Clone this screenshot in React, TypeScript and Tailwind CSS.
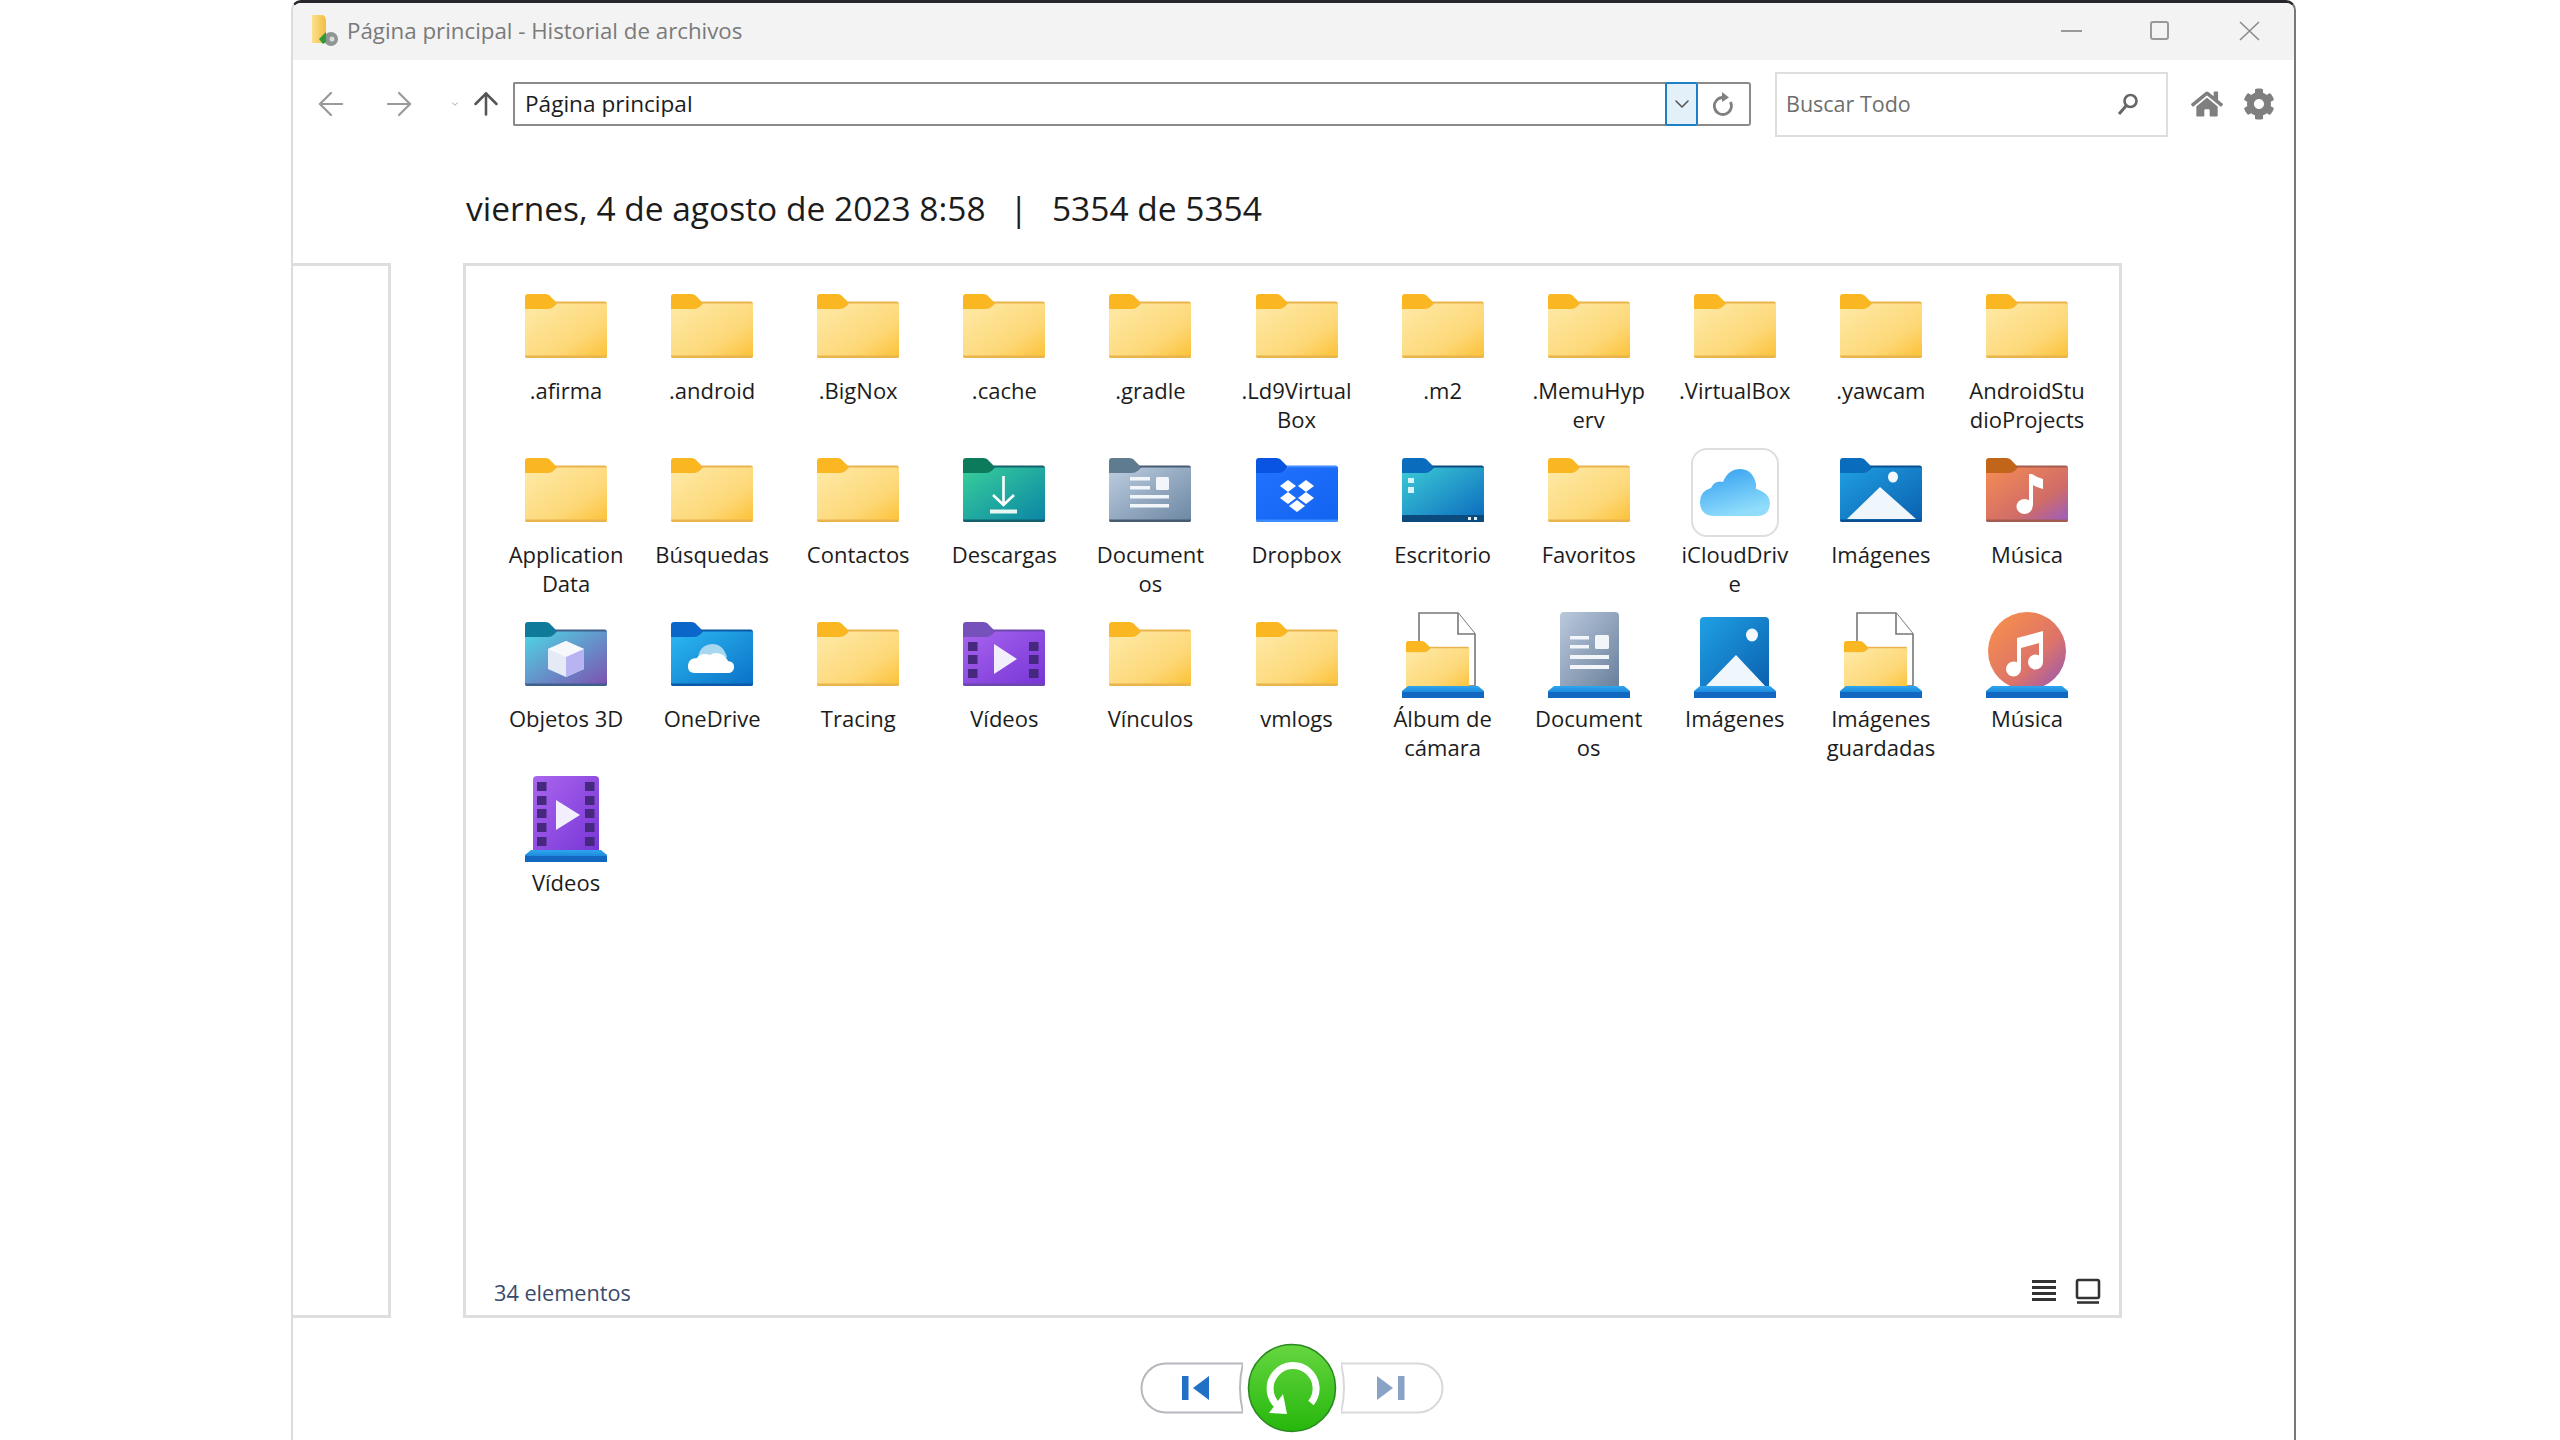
import React, { useId } from "react";
import { ArrowLeft, ArrowRight, ArrowUp, ChevronDown } from "lucide-react";
import { FaHome, FaCog } from "react-icons/fa";

type FP = { tab: string; from: string; to: string; mid?: string; edge: string; children?: React.ReactNode };

function FolderShape({ tab, from, to, mid, edge, children }: FP) {
  const id = useId();
  return (
    <g>
      <defs>
        <linearGradient id={id} x1="0" y1="0" x2="1" y2="1">
          <stop offset="0" stopColor={from} />
          {mid ? <stop offset="0.65" stopColor={mid} /> : null}
          <stop offset="1" stopColor={to} />
        </linearGradient>
      </defs>
      <path d="M25 7.5H80Q82 7.5 82 10V16H25Z" fill={edge} />
      <path d="M0 3Q0 0 3 0H20Q24 0 26 3L30 7Q32 9 30 11L27 14Q25 15.5 22 15.5H0Z" fill={tab} />
      <path d="M0 15H23Q26 15 29 12.5L32 9.5H82V62Q82 64 80 64H2Q0 64 0 62Z" fill={`url(#${id})`} />
      <path d="M0 61.5H82V62Q82 64 80 64H2Q0 64 0 62Z" fill={edge} />
      {children}
    </g>
  );
}

function Folder(props: FP) {
  return (
    <svg width="82" height="64" viewBox="0 0 82 64" className="mt-[10px] block">
      <FolderShape {...props} />
    </svg>
  );
}

const Yellow = () => <Folder tab="#fbb721" from="#feeaa8" mid="#fdd878" to="#fcc136" edge="#e9b44c" />;

const FilmStrip = ({ xs, ys, h }: { xs: number[]; ys: number[]; h: number }) => (
  <g fill="#46297e">
    {xs.flatMap((x) => ys.map((y) => <rect key={`${x}-${y}`} x={x} y={y} width="9.5" height={h} />))}
  </g>
);

const Download = () => (
  <Folder tab="#0c7b5c" from="#38cf9a" to="#0a84a6" edge="#14606c">
    <path d="M40.5 18V46M30 37L40.5 47L51 37" stroke="#fff" strokeWidth="2.6" fill="none" />
    <rect x="27" y="51.5" width="27" height="4" fill="#e6f8f4" />
  </Folder>
);

const Docs = () => (
  <Folder tab="#5e7b8f" from="#bccde0" to="#6c86a2" edge="#465a70">
    <g fill="#f2f6fa">
      <rect x="21" y="19" width="20" height="3.5" />
      <rect x="21" y="28" width="20" height="3.5" />
      <rect x="47" y="19" width="13" height="13" rx="1.5" />
      <rect x="21" y="37" width="39" height="3.5" />
      <rect x="21" y="46" width="39" height="3.5" />
    </g>
  </Folder>
);

const Dropbox = () => (
  <Folder tab="#0a54e4" from="#2272ff" to="#1263f0" edge="#3f8cff">
    <g fill="#fff">
      <path d="M32 22L40 28L32 34L24 28Z" />
      <path d="M50 22L58 28L50 34L42 28Z" />
      <path d="M32 34L40 40L32 46L24 40Z" />
      <path d="M50 34L58 40L50 46L42 40Z" />
      <path d="M41 42L49 48L41 54L33 48Z" />
    </g>
  </Folder>
);

const Desktop = () => (
  <Folder tab="#0a6cbc" from="#3ccbd6" to="#0b68bd" edge="#0a4a7c">
    <rect x="6" y="20" width="6" height="5" fill="#d8f4f6" />
    <rect x="6" y="29" width="6" height="6" fill="#d8f4f6" />
    <rect y="57" width="82" height="7" rx="1" fill="#0a4a7c" />
    <rect x="66" y="59" width="3" height="3" fill="#dfeef8" />
    <rect x="72" y="59" width="3" height="3" fill="#dfeef8" />
  </Folder>
);

const Pictures = () => (
  <Folder tab="#0a6cbc" from="#209fe2" to="#0a5fae" edge="#0a4f90">
    <ellipse cx="53" cy="19" rx="5" ry="5.5" fill="#f4f9fd" />
    <path d="M40 29L76 61H7Z" fill="#f0f7fc" />
  </Folder>
);

const Music = () => (
  <Folder tab="#c0651a" from="#f68c54" mid="#cf6c68" to="#985cc4" edge="#a25c50">
    <path d="M43 48V16H46Q50 19 57 21V31Q50 29 47 27V48Z" fill="#fff" />
    <ellipse cx="38.5" cy="48.5" rx="8" ry="7.5" fill="#fff" />
  </Folder>
);

const Objects3D = () => (
  <Folder tab="#0f7a9a" from="#4dd8e4" to="#7d4fb0" edge="#40608c">
    <path d="M41 19L59 27V47L41 55L23 47V27Z" fill="#e4eaf6" />
    <path d="M41 19L59 27L41 35L23 27Z" fill="#f6f8fc" />
    <path d="M41 35L59 27V47L41 55Z" fill="#b8b4f2" />
  </Folder>
);

const OneDrive = () => (
  <Folder tab="#0a66c8" from="#2cb8f2" to="#0a70c6" edge="#0a5aa8">
    <path d="M27 39Q27 23 41 22Q52 22 56 35L44 46H25Z" fill="#a8d8f0" />
    <path d="M23 51Q16 50 17 43Q18 36 26 36Q30 30 39 33Q44 29 52 33Q57 38 57 39Q64 40 63 46Q62 51 57 51Z" fill="#fff" />
  </Folder>
);

const VideoF = () => (
  <Folder tab="#7650bb" from="#a864ee" to="#7634d6" edge="#6d46b0">
    <FilmStrip xs={[5, 66]} ys={[20, 33, 47]} h={9} />
    <path d="M31 22L54 37L31 52Z" fill="#f3eefb" />
  </Folder>
);

const ICloud = () => {
  const id = useId();
  return (
    <div className="flex h-[89px] w-[88px] items-center justify-center rounded-[16px] border-2 border-[#dedede] bg-white">
      <svg width="70" height="48" viewBox="0 0 70 48">
        <defs>
          <linearGradient id={id} x1="0" y1="0" x2="0.4" y2="1">
            <stop offset="0" stopColor="#2f9df0" />
            <stop offset="1" stopColor="#8fdcfb" />
          </linearGradient>
        </defs>
        <path d="M13 47Q0 46 0 33Q0 22 11 19Q15 11 23 13Q28 0 41 0Q53 1 56 15Q56 18 56 20Q70 24 70 35Q69 47 57 47Z" fill={`url(#${id})`} />
      </svg>
    </div>
  );
};

function Tall({ children }: { children: React.ReactNode }) {
  const id = useId();
  return (
    <svg width="82" height="86" viewBox="0 0 82 86" className="block">
      <defs>
        <linearGradient id={id} x1="0" y1="0" x2="0" y2="1">
          <stop offset="0" stopColor="#2ea6ee" />
          <stop offset="1" stopColor="#0e6fcc" />
        </linearGradient>
      </defs>
      {children}
      <path d="M6 74H76L82 79V86H0V79Z" fill={`url(#${id})`} />
      <rect y="80" width="82" height="6" fill="#1268c0" />
    </svg>
  );
}

const FileFolder = () => (
  <Tall>
    <path d="M17 1H56L73 22V74H17Z" fill="#fff" stroke="#777" strokeWidth="1.6" />
    <path d="M56 1V22H73" fill="#fff" stroke="#777" strokeWidth="1.6" />
    <g transform="translate(4 29) scale(0.77 0.75)">
      <FolderShape tab="#fbb721" from="#feeaa8" mid="#fdd878" to="#fcc136" edge="#e9b44c" />
    </g>
  </Tall>
);

const DocTall = () => {
  const id = useId();
  return (
    <Tall>
      <defs>
        <linearGradient id={id} x1="0" y1="0" x2="1" y2="1">
          <stop offset="0" stopColor="#bac9dd" />
          <stop offset="1" stopColor="#687f9a" />
        </linearGradient>
      </defs>
      <rect x="12" y="0" width="59" height="78" rx="4" fill={`url(#${id})`} />
      <g fill="#f2f6fa">
        <rect x="22" y="24" width="19" height="3.5" />
        <rect x="22" y="33" width="19" height="3.5" />
        <rect x="47" y="23" width="14" height="14" rx="1.5" />
        <rect x="22" y="43" width="39" height="4" />
        <rect x="22" y="53" width="39" height="4" />
      </g>
    </Tall>
  );
};

const PicTall = () => {
  const id = useId();
  return (
    <Tall>
      <defs>
        <linearGradient id={id} x1="0" y1="0" x2="1" y2="1">
          <stop offset="0" stopColor="#20a0e4" />
          <stop offset="1" stopColor="#0a5fae" />
        </linearGradient>
      </defs>
      <rect x="6" y="5" width="69" height="73" rx="4" fill={`url(#${id})`} />
      <ellipse cx="58" cy="23" rx="6" ry="6.5" fill="#f4f9fd" />
      <path d="M42 43L73 76H10Z" fill="#f0f7fc" />
    </Tall>
  );
};

const MusicTall = () => {
  const id = useId();
  return (
    <Tall>
      <defs>
        <linearGradient id={id} x1="0" y1="0" x2="1" y2="1">
          <stop offset="0.1" stopColor="#f58d4e" />
          <stop offset="0.6" stopColor="#dd7468" />
          <stop offset="1" stopColor="#9255bc" />
        </linearGradient>
      </defs>
      <circle cx="41" cy="39" r="39" fill={`url(#${id})`} />
      <path d="M31 26L57 19V50H53V31L35 36V57H31Z" fill="#fff" />
      <ellipse cx="27.5" cy="57" rx="7.5" ry="7.5" fill="#fff" />
      <ellipse cx="49.5" cy="50" rx="7.5" ry="7.5" fill="#fff" />
    </Tall>
  );
};

const VideoTall = () => {
  const id = useId();
  return (
    <Tall>
      <defs>
        <linearGradient id={id} x1="0" y1="0" x2="1" y2="1">
          <stop offset="0" stopColor="#aa66ee" />
          <stop offset="1" stopColor="#7634d6" />
        </linearGradient>
      </defs>
      <rect x="8" y="0" width="66" height="80" rx="4" fill={`url(#${id})`} />
      <FilmStrip xs={[12, 60]} ys={[6, 20, 33, 47, 61]} h={9} />
      <path d="M31 24L55 39L31 54Z" fill="#f3eefb" />
    </Tall>
  );
};

const items: [string, React.FC][] = [
  [".afirma", Yellow],
  [".android", Yellow],
  [".BigNox", Yellow],
  [".cache", Yellow],
  [".gradle", Yellow],
  [".Ld9Virtual\nBox", Yellow],
  [".m2", Yellow],
  [".MemuHyp\nerv", Yellow],
  [".VirtualBox", Yellow],
  [".yawcam", Yellow],
  ["AndroidStu\ndioProjects", Yellow],
  ["Application\nData", Yellow],
  ["Búsquedas", Yellow],
  ["Contactos", Yellow],
  ["Descargas", Download],
  ["Document\nos", Docs],
  ["Dropbox", Dropbox],
  ["Escritorio", Desktop],
  ["Favoritos", Yellow],
  ["iCloudDriv\ne", ICloud],
  ["Imágenes", Pictures],
  ["Música", Music],
  ["Objetos 3D", Objects3D],
  ["OneDrive", OneDrive],
  ["Tracing", Yellow],
  ["Vídeos", VideoF],
  ["Vínculos", Yellow],
  ["vmlogs", Yellow],
  ["Álbum de\ncámara", FileFolder],
  ["Document\nos", DocTall],
  ["Imágenes", PicTall],
  ["Imágenes\nguardadas", FileFolder],
  ["Música", MusicTall],
  ["Vídeos", VideoTall],
];

function TitleIcon() {
  const id = useId();
  return (
    <svg width="26" height="32" viewBox="0 0 26 32" className="shrink-0">
      <defs>
        <linearGradient id={id} x1="0" y1="0" x2="1" y2="0">
          <stop offset="0" stopColor="#fbe08e" />
          <stop offset="1" stopColor="#f4bd3e" />
        </linearGradient>
      </defs>
      <path d="M0 0H11Q14 2 14 6V28H0Z" fill={`url(#${id})`} />
      <circle cx="19" cy="24" r="7" fill="#8f9692" />
      <circle cx="20" cy="24" r="2.5" fill="#dadada" />
      <path d="M7 24L14 17V27L11 29Z" fill="#2f9a3a" />
    </svg>
  );
}

function BackButton() {
  return (
    <svg width="103" height="52" viewBox="0 0 103 52" className="block">
      <path d="M26 1.5H103Q97 26 103 50.5H26A24.5 24.5 0 0 1 26 1.5Z" fill="#fff" stroke="#b6b8be" strokeWidth="2" />
      <rect x="42" y="14" width="6.5" height="24" fill="#2070c6" />
      <path d="M69 14V38L53 26Z" fill="#2070c6" />
    </svg>
  );
}

function NextButton() {
  return (
    <svg width="103" height="52" viewBox="0 0 103 52" className="block">
      <path d="M0 1.5H77A24.5 24.5 0 0 1 77 50.5H0Q6 26 0 1.5Z" fill="#fff" stroke="#d8d9dd" strokeWidth="2" />
      <path d="M36 14V38L52 26Z" fill="#88a3c6" />
      <rect x="57" y="14" width="6.5" height="24" fill="#88a3c6" />
    </svg>
  );
}

function RestoreButton() {
  const id = useId();
  return (
    <svg width="90" height="90" viewBox="0 0 90 90" className="block">
      <defs>
        <linearGradient id={id} x1="0" y1="0" x2="0" y2="1">
          <stop offset="0" stopColor="#66d640" />
          <stop offset="1" stopColor="#26b70c" />
        </linearGradient>
      </defs>
      <circle cx="45" cy="45" r="43.5" fill={`url(#${id})`} stroke="#2a8a22" strokeWidth="1.6" />
      <path d="M64 60A23 23 0 1 0 30 62" fill="none" stroke="#fff" strokeWidth="7" />
      <path d="M22 70L40 71L36 51Z" fill="#fff" />
    </svg>
  );
}

export default function App() {
  return (
    <div className="flex h-[1440px] w-[2560px] overflow-hidden bg-white pl-[291px] font-['Open_Sans','Noto_Sans',sans-serif]">
      <div className="flex h-[1440px] w-[2005px] flex-col rounded-t-[10px] border-t-[3px] border-r-2 border-l-2 border-t-[#26262c] border-r-[#77777f] border-l-[#dcdcdc] bg-white">
        <div className="flex h-[57px] shrink-0 items-center rounded-t-[8px] bg-[#f3f3f3] pr-[34px] pb-[2px] pl-[19px]">
          <TitleIcon />
          <span className="ml-[9px] text-[22.3px] text-[#7a7a7a]">Página principal - Historial de archivos</span>
          <div className="ml-auto flex items-center text-[#8a8a8a]">
            <div className="h-[2px] w-[21px] bg-[#999]" />
            <div className="ml-[68px] h-[19px] w-[19px] rounded-[3px] border-2 border-[#999]" />
            <svg width="21" height="20" viewBox="0 0 21 20" stroke="#8a8a8a" strokeWidth="1.6" className="ml-[70px]">
              <path d="M1 1L20 19M20 1L1 19" />
            </svg>
          </div>
        </div>

        <div className="flex h-[88px] shrink-0 items-center pl-[19px]">
          <ArrowLeft className="h-[38px] w-[38px] shrink-0 text-[#9a9a9a]" strokeWidth={1.4} />
          <ArrowRight className="ml-[30px] h-[38px] w-[38px] shrink-0 text-[#9a9a9a]" strokeWidth={1.4} />
          <ChevronDown className="ml-[32px] h-[10px] w-[10px] shrink-0 text-[#999]" />
          <ArrowUp className="ml-[8px] h-[36px] w-[36px] shrink-0 text-[#555]" strokeWidth={1.7} />
          <div className="ml-[9px] flex h-[44px] w-[1153px] shrink-0 items-center rounded-l-[2px] border-2 border-r-0 border-[#8a8a8a] bg-white pl-[10px] text-[22.6px] text-[#1c1c1c]">
            Página principal
          </div>
          <div className="-ml-px flex h-[44px] w-[33px] shrink-0 items-center justify-center rounded-[2px] border-2 border-[#1d80c4] bg-[#e3eff9]">
            <ChevronDown className="h-[24px] w-[24px] text-[#555]" strokeWidth={1.6} />
          </div>
          <div className="-ml-px flex h-[44px] w-[54px] shrink-0 items-center justify-center rounded-r-[3px] border-2 border-l-0 border-[#8a8a8a]">
            <svg width="20" height="26" viewBox="0 0 20 26" fill="none" stroke="#808080" strokeWidth="2.8">
              <path d="M17.4 11A8.5 8.5 0 1 1 9.5 6.5" />
              <path d="M9 1L16 6.5L9 11Z" fill="#808080" stroke="none" />
            </svg>
          </div>
          <div className="ml-[24px] flex h-[65px] w-[393px] shrink-0 items-center justify-between border-2 border-[#dedede] pr-[27px] pl-[9px] text-[21.5px] text-[#6e6e6e]">
            <span>Buscar Todo</span>
            <svg width="22" height="22" viewBox="0 0 22 22" fill="none" stroke="#666" strokeWidth="2.6">
              <circle cx="13.5" cy="8" r="6" />
              <path d="M9 13L2 21" strokeWidth="3" />
            </svg>
          </div>
          <FaHome className="ml-[23px] h-[30px] w-[32px] shrink-0 text-[#7f7f7f]" />
          <FaCog className="ml-[20px] h-[32px] w-[32px] shrink-0 text-[#7f7f7f]" />
        </div>

        <div className="flex h-[115px] shrink-0 items-center pt-[6px] pl-[173px] text-[33.5px] text-[#1c1c1c]">
          <span>viernes, 4 de agosto de 2023 8:58</span>
          <span className="ml-[24px]">|</span>
          <span className="ml-[24px]">5354 de 5354</span>
        </div>

        <div className="flex h-[1055px] shrink-0">
          <div className="h-full w-[98px] border-y-[3px] border-r-[3px] border-[#dedede]" />
          <div className="ml-[72px] flex h-full w-[1659px] flex-col border-[3px] border-[#dedede] pt-[18px]">
            <div className="grid auto-rows-[164px] grid-cols-[repeat(11,146.1px)] pl-[27px]">
              {items.map(([name, Icon], i) => (
                <div key={i} className="flex flex-col items-center">
                  <div className="flex h-[86px] w-[90px] justify-center">
                    <Icon />
                  </div>
                  <div className="mt-[6px] whitespace-pre-line text-center text-[22px] leading-[29px] text-[#1c1c1c]">
                    {name}
                  </div>
                </div>
              ))}
            </div>
            <div className="mt-auto flex h-[48px] items-center pr-[18px] pl-[28px]">
              <span className="pt-[4px] text-[21.7px] text-[#3b4a6b]">34 elementos</span>
              <div className="ml-auto flex items-center gap-[18px]">
                <svg width="26" height="24" viewBox="0 0 26 24" fill="#333">
                  <rect x="1" y="1" width="24" height="3" />
                  <rect x="1" y="7" width="24" height="3" />
                  <rect x="1" y="13" width="24" height="3" />
                  <rect x="1" y="19" width="24" height="3" />
                </svg>
                <svg width="26" height="26" viewBox="0 0 26 26" fill="none" stroke="#333">
                  <rect x="2" y="2" width="22" height="18" rx="1.5" strokeWidth="2.6" />
                  <path d="M2 24.5H24" strokeWidth="2.6" />
                </svg>
              </div>
            </div>
          </div>
        </div>

        <div className="flex h-[122px] shrink-0 items-center pt-[17px] pl-[847px]">
          <BackButton />
          <div className="ml-[4px]">
            <RestoreButton />
          </div>
          <div className="ml-[4px]">
            <NextButton />
          </div>
        </div>
      </div>
    </div>
  );
}
